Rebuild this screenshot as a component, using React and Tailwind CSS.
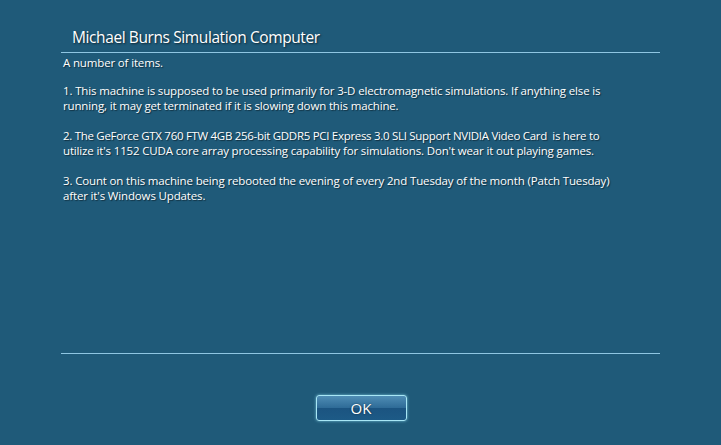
import React from 'react';

const font = { fontFamily: '"Open Sans", "Noto Sans", sans-serif' };

export default function App() {
    return (
        <div className="w-[721px] h-[445px] bg-[#1f5a79] text-white flex flex-col overflow-hidden" style={font}>
            <div className="mx-[61px] w-[599px] flex flex-col">
                {/* Title */}
                <div className="pl-[11px] pt-[27px] h-[52px] text-[15.5px] leading-[20px] tracking-[-0.4px] [text-shadow:1px_1px_2px_rgba(0,0,0,0.6)]">
                    Michael Burns Simulation Computer
                </div>
                <div className="h-px bg-[#8fc6e2]" />

                {/* Notice text */}
                <div className="h-[300px] pl-[2px] pt-[2px] text-[11.5px] leading-[15px] tracking-[-0.15px] [text-shadow:1px_1px_1px_rgba(0,0,0,0.5)]">
                    <p>A number of items.</p>
                    <p className="mt-[13px]">
                        1. This machine is supposed to be used primarily for 3-D electromagnetic simulations. If anything else is<br />
                        running, it may get terminated if it is slowing down this machine.
                    </p>
                    <p className="mt-[15px]">
                        <span className="tracking-[-0.3px]">2. The GeForce GTX 760 FTW 4GB 256-bit GDDR5 PCI Express 3.0 SLI Support NVIDIA Video Card&nbsp; is here to</span><br />
                        utilize it's 1152 CUDA core array processing capability for simulations. Don't wear it out playing games.
                    </p>
                    <p className="mt-[15px]">
                        3. Count on this machine being rebooted the evening of every 2nd Tuesday of the month (Patch Tuesday)<br />
                        after it's Windows Updates.
                    </p>
                </div>
                <div className="h-px bg-[#8fc6e2]" />
            </div>

            {/* OK button */}
            <div className="flex justify-center pt-[41px] pl-[1px]">
                <button className="w-[91px] h-[26px] rounded-[3px] border border-[#a8e6f5] shadow-[0_0_3px_rgba(140,220,240,0.8)] bg-[linear-gradient(to_bottom,#4f8db5_0%,#2f6c98_48%,#1b5481_52%,#1d5a86_100%)] text-[15px] leading-[22px] text-white [text-shadow:0_0_2px_rgba(0,0,0,0.6)]">
                    OK
                </button>
            </div>
        </div>
    );
}
